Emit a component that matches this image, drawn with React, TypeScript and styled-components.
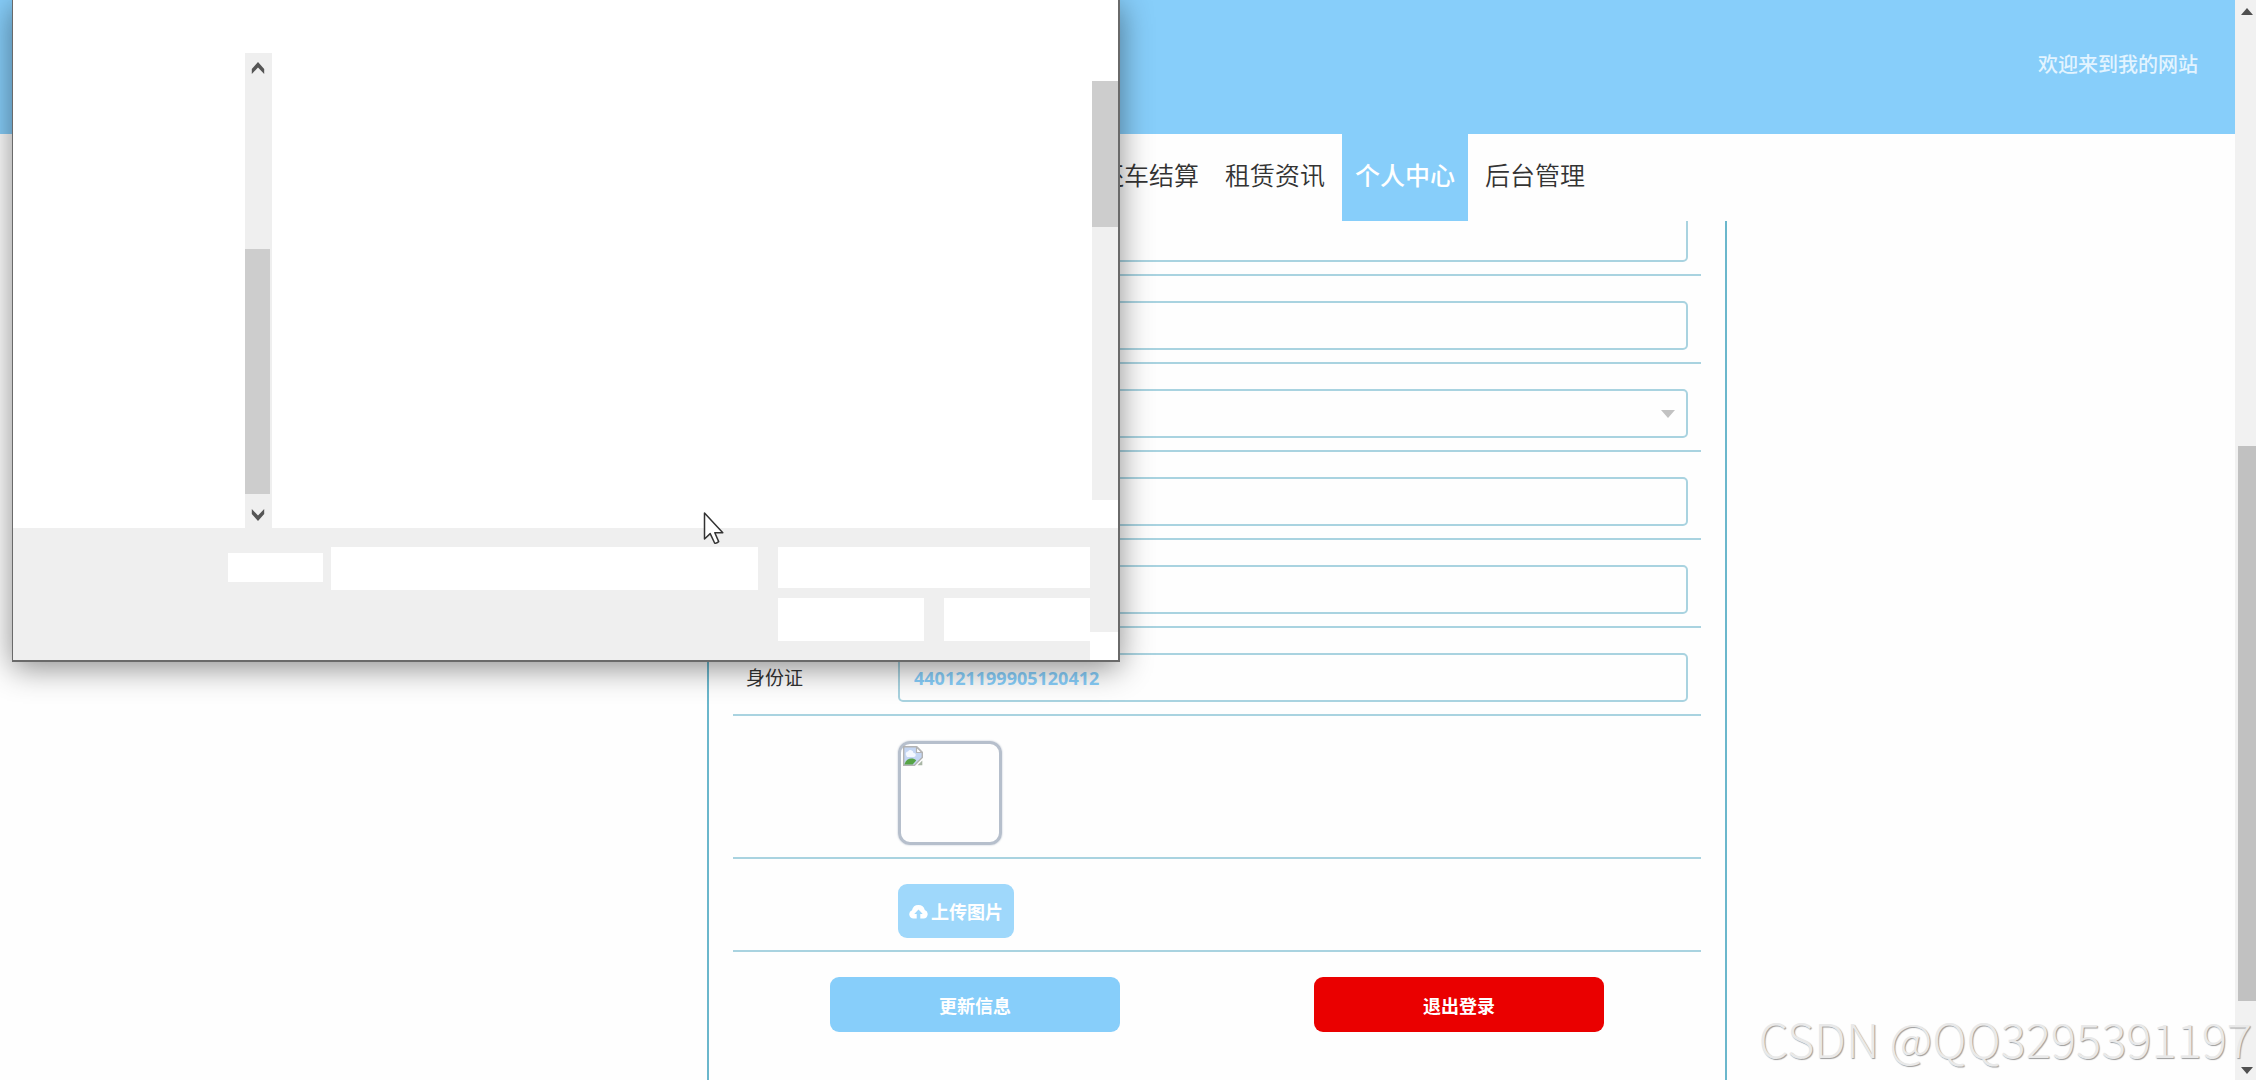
import React from "react";
import styled, { createGlobalStyle } from "styled-components";

const sky = "#87cefa";
const line = "#a9d3e0";

const GlobalStyle = createGlobalStyle`
  * { box-sizing: border-box; }
  body {
    margin: 0;
    background: #fefefe;
    color: #333;
    font-family: "Open Sans", "Noto Sans CJK SC", sans-serif;
    overflow: hidden;
  }
  button, input, select { font: inherit; margin: 0; }
`;

const Page = styled.div`
  display: flex;
  height: 100vh;
  position: relative;
  overflow: hidden;
`;

const Site = styled.div`
  flex: 1;
  min-width: 0;
  display: flex;
  flex-direction: column;
`;

const Banner = styled.header`
  flex: none;
  display: flex;
  justify-content: flex-end;
  padding: 50px 37px 54px;
  background: ${sky};
  color: #e3f4ff;
  font-size: 20px;
  font-weight: 500;
  line-height: 30px;
`;

const Container = styled.div`
  width: 100%;
  max-width: 1219px;
  margin: 0 auto;
  display: flex;
  justify-content: flex-end;
  align-items: flex-start;
`;

const Nav = styled.nav`
  flex: none;
  position: relative;
  background: #fefefe;
`;

const Tabs = styled(Container)`
  padding-right: 129px;
`;

const Tab = styled.a<{ $active?: boolean }>`
  padding: 0 13px 4px;
  margin: ${(p) => (p.$active ? "0 4px" : "0")};
  font-size: 25px;
  line-height: 83px;
  text-decoration: none;
  white-space: nowrap;
  color: ${(p) => (p.$active ? "#fff" : "#333")};
  background: ${(p) => (p.$active ? sky : "transparent")};
  font-weight: ${(p) => (p.$active ? 500 : 350)};
`;

const Main = styled.main`
  flex: 1;
  min-height: 0;
  overflow: hidden;
  display: flex;
`;

const Panel = styled.form`
  width: 1020px;
  margin-top: -33px;
  padding: 0 24px 96px;
  border: 2px solid #6bb7cc;
  border-top: 0;
`;

const Row = styled.div`
  display: flex;
  align-items: center;
  padding: 25px 13px 12px;
  border-bottom: 2px solid ${line};
`;

const Label = styled.label`
  flex: none;
  width: 152px;
  font-size: 19px;
  line-height: 28px;
`;

const Blank = styled.div`
  flex: none;
  width: 152px;
`;

const Field = styled.input`
  flex: 1;
  min-width: 0;
  height: 49px;
  padding: 0 14px;
  border: 2px solid ${line};
  border-radius: 5px;
  background: transparent;
  color: ${sky};
  font-size: 18px;
  font-weight: 700;
  outline: none;
`;

const SelectWrap = styled.div`
  flex: 1;
  position: relative;
  display: flex;
  svg {
    position: absolute;
    right: 13px;
    top: 21px;
    pointer-events: none;
  }
`;

const SelectField = styled(Field).attrs({ as: "select" })`
  appearance: none;
`;

const Photo = styled.div`
  width: 104px;
  height: 104px;
  padding: 2px;
  border: 3px solid #b6bfcc;
  border-radius: 12px;
  box-shadow: 0 0 2px #b6bfcc;
`;

const Upload = styled.button`
  display: flex;
  align-items: center;
  gap: 3px;
  height: 54px;
  padding: 0 11px;
  border: 0;
  border-radius: 9px;
  background: #9fd8fb;
  color: #fff;
  font-size: 18px;
  font-weight: 700;
  white-space: nowrap;
`;

const Actions = styled.div`
  display: flex;
  justify-content: space-around;
  padding-top: 25px;
`;

const Action = styled.button<{ $tone: string }>`
  width: 30%;
  height: 55px;
  border: 0;
  border-radius: 9px;
  background: ${(p) => p.$tone};
  color: #fff;
  font-size: 18px;
  font-weight: 700;
`;

const Scrollbar = styled.div`
  flex: none;
  width: 21px;
  padding: 8px 0 6px 3px;
  display: flex;
  flex-direction: column;
  align-items: center;
  background: #f1f1f1;
`;

const Track = styled.div`
  flex: 1;
  width: 100%;
  display: grid;
  grid-template-rows: 431fr 554fr 66fr;
`;

const Thumb = styled.div`
  grid-row: 2;
  background: #c1c1c1;
`;

const Dialog = styled.section`
  position: absolute;
  left: 12px;
  top: 0;
  width: 1108px;
  border: 1px solid #6a6a6a;
  border-width: 0 2px 2px 1px;
  background: #fff;
  box-shadow: 0 6px 30px rgba(0, 0, 0, 0.45);
`;

const Browser = styled.div`
  display: flex;
  justify-content: space-between;
  height: 528px;
  padding: 53px 0 0 232px;
`;

const TreeBar = styled.div`
  width: 27px;
  padding: 9px 2px 7px 0;
  display: flex;
  flex-direction: column;
  align-items: center;
  background: #efefef;
`;

const TreeThumb = styled.div`
  width: 100%;
  height: 245px;
  margin: auto 0 15px;
  background: #cdcdcd;
`;

const ListBar = styled.div`
  width: 26px;
  margin: 28px 0;
  background: #f0f0f0;
`;

const ListThumb = styled.div`
  height: 146px;
  background: #cdcdcd;
`;

const Footer = styled.div`
  display: flex;
  align-items: flex-start;
  height: 132px;
  background: #efefef;
  padding: 19px 0 0 215px;
`;

const NameTag = styled.label`
  width: 95px;
  height: 29px;
  margin: 6px 8px 0 0;
  background: #fff;
`;

const NameInput = styled.input`
  width: 427px;
  height: 43px;
  margin-right: 20px;
  padding: 0 8px;
  border: 0;
  background: #fff;
`;

const Choices = styled.div`
  width: 312px;
  display: grid;
  grid-template-columns: 1fr 1fr;
  gap: 10px 20px;
`;

const TypeSelect = styled.select`
  grid-column: 1 / -1;
  height: 41px;
  border: 0;
  appearance: none;
  background: #fff;
`;

const DialogButton = styled.button`
  height: 43px;
  border: 0;
  background: #fff;
`;

const Grip = styled.div`
  align-self: flex-end;
  flex: 1;
  height: 28px;
  background: #fff;
`;

const Pointer = styled.svg`
  position: absolute;
  left: 703px;
  top: 511px;
`;

const Watermark = styled.div`
  position: absolute;
  right: 4px;
  bottom: 10px;
  font-family: "Noto Sans CJK SC", sans-serif;
  font-weight: 300;
  font-size: 47px;
  line-height: 64px;
  white-space: nowrap;
  color: #e9e9e9;
  text-shadow: 1px 1px 1px #9c9c9c;
  pointer-events: none;
`;

const Chevron = ({ down }: { down?: boolean }) => (
  <svg width="14" height="12" viewBox="0 0 14 12" fill="#555">
    {down ? (
      <path d="M7 12 0.8 5V0L7 6.6 13.2 0v5z" />
    ) : (
      <path d="M7 0 13.2 7v5L7 5.4.8 12V7z" />
    )}
  </svg>
);

const Triangle = ({ down }: { down?: boolean }) => (
  <svg width="12" height="7" viewBox="0 0 12 7" fill="#505050">
    <path d={down ? "M0 0h12L6 7z" : "M6 0l6 7H0z"} />
  </svg>
);

const BrokenImage = () => (
  <svg width="20" height="20" viewBox="0 0 20 20">
    <path d="M.7.7h13.1l5.5 5.5v5.3L11.5 19.3H.7z" fill="#c4d6f3" stroke="#b3b3b3" strokeWidth="1.4" />
    <path d="M3 9a2.4 2.4 0 0 1 2-3.5 3 3 0 0 1 5.5 1.5A2 2 0 0 1 11 11H4z" fill="#f4f8ff" />
    <path d="M1.4 18.6c1-4 4-6 7-6 2 0 3.6.6 4.8 2l-3.6 4z" fill="#57a447" />
    <path d="M13.5 1v5.5h5.5z" fill="#fff" stroke="#b3b3b3" strokeWidth="1.2" />
    <path d="M19.3 14.5v4.8h-4.8z" fill="#a9b6a5" />
  </svg>
);

const CloudUp = () => (
  <svg width="19" height="15" viewBox="0 0 19 15">
    <path d="M4.5 14.5A4.3 4.3 0 0 1 3 6.2 6.6 6.6 0 0 1 15.8 6a4.4 4.4 0 0 1-1.2 8.5h-3.3V10h2.4L9.5 5.4 5.3 10h2.4v4.5z" fill="#fff" />
  </svg>
);

const tabs = ["还车结算", "租赁资讯", "个人中心", "后台管理"];

export default function App() {
  return (
    <>
      <GlobalStyle />
      <Page>
        <Site>
          <Banner>欢迎来到我的网站</Banner>
          <Nav>
            <Tabs>
              {tabs.map((t) => (
                <Tab key={t} href="#" $active={t === "个人中心"}>
                  {t}
                </Tab>
              ))}
            </Tabs>
          </Nav>
          <Main>
            <Container>
              <Panel onSubmit={(e) => e.preventDefault()}>
                <Row>
                  <Blank />
                  <Field aria-label="账号" />
                </Row>
                <Row>
                  <Blank />
                  <Field aria-label="姓名" />
                </Row>
                <Row>
                  <Blank />
                  <SelectWrap>
                    <SelectField aria-label="性别" />
                    <svg width="14" height="8" viewBox="0 0 14 8" fill="#c2c2c2">
                      <path d="M0 0h14L7 8z" />
                    </svg>
                  </SelectWrap>
                </Row>
                <Row>
                  <Blank />
                  <Field aria-label="手机" />
                </Row>
                <Row>
                  <Blank />
                  <Field aria-label="邮箱" />
                </Row>
                <Row>
                  <Label htmlFor="idcard">身份证</Label>
                  <Field id="idcard" defaultValue="440121199905120412" />
                </Row>
                <Row>
                  <Blank />
                  <Photo>
                    <BrokenImage />
                  </Photo>
                </Row>
                <Row>
                  <Blank />
                  <Upload type="button">
                    <CloudUp />
                    上传图片
                  </Upload>
                </Row>
                <Actions>
                  <Action type="submit" $tone={sky}>
                    更新信息
                  </Action>
                  <Action type="button" $tone="#ea0000">
                    退出登录
                  </Action>
                </Actions>
              </Panel>
            </Container>
          </Main>
        </Site>
        <Scrollbar>
          <Triangle />
          <Track>
            <Thumb />
          </Track>
          <Triangle down />
        </Scrollbar>

        <Dialog>
          <Browser>
            <TreeBar>
              <Chevron />
              <TreeThumb />
              <Chevron down />
            </TreeBar>
            <ListBar>
              <ListThumb />
            </ListBar>
          </Browser>
          <Footer>
            <NameTag htmlFor="filename" />
            <NameInput id="filename" aria-label="文件名" />
            <Choices>
              <TypeSelect aria-label="文件类型" />
              <DialogButton type="button" aria-label="打开" />
              <DialogButton type="button" aria-label="取消" />
            </Choices>
            <Grip />
          </Footer>
        </Dialog>

        <Pointer width="22" height="34" viewBox="0 0 22 34">
          <path
            d="M1.5 2v26l5.7-5.4 4.3 9.2q1.5 1.2 4.2-1.2l-3.9-8.8h8z"
            fill="#fff"
            stroke="#333"
            strokeWidth="1.5"
            strokeLinejoin="round"
          />
        </Pointer>
        <Watermark>CSDN @QQ3295391197</Watermark>
      </Page>
    </>
  );
}
